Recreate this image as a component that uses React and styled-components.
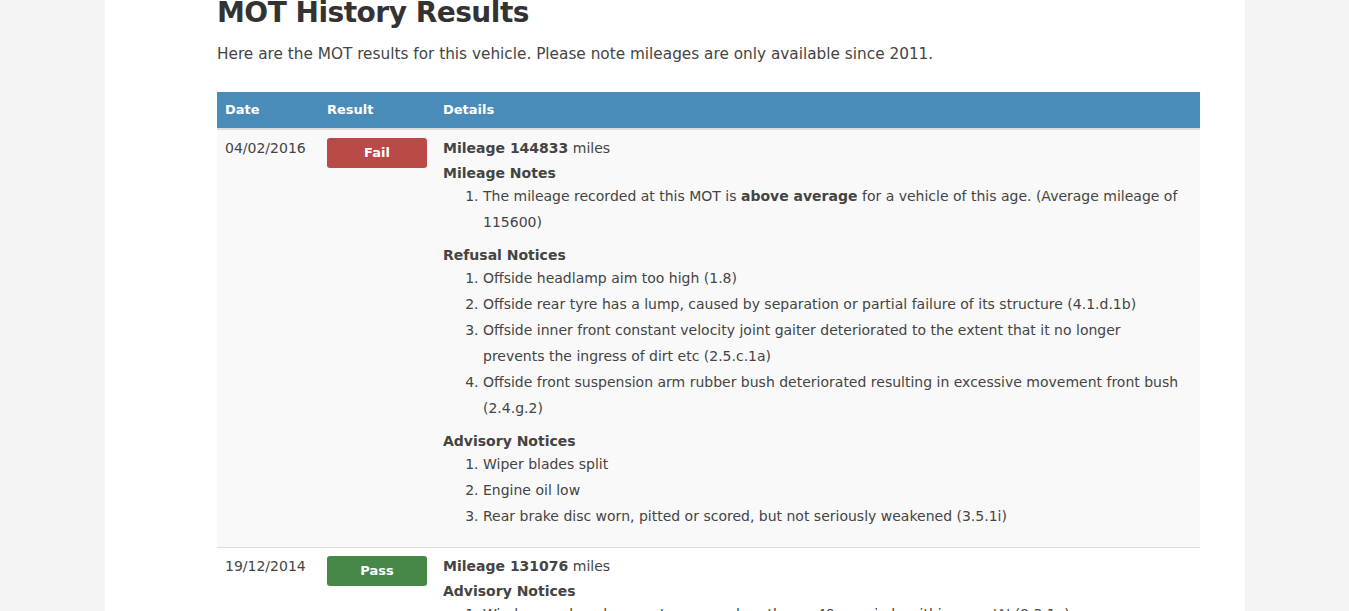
import React from "react";
import styled, { createGlobalStyle } from "styled-components";

const GlobalStyle = createGlobalStyle`
  html, body {
    margin: 0;
    padding: 0;
    background: #f4f4f4;
  }
  body {
    font-family: "DejaVu Sans", "Liberation Sans", sans-serif;
    color: #444;
  }
`;

const results = [
  {
    date: "04/02/2016",
    result: "Fail",
    mileage: "144833",
    sections: [
      {
        title: "Mileage Notes",
        items: [
          <>
            The mileage recorded at this MOT is <b>above average</b> for a
            vehicle of this age. (Average mileage of 115600)
          </>,
        ],
      },
      {
        title: "Refusal Notices",
        items: [
          "Offside headlamp aim too high (1.8)",
          "Offside rear tyre has a lump, caused by separation or partial failure of its structure (4.1.d.1b)",
          <>
            Offside inner front constant velocity joint gaiter deteriorated to
            the extent that it no longer
            <br />
            prevents the ingress of dirt etc (2.5.c.1a)
          </>,
          "Offside front suspension arm rubber bush deteriorated resulting in excessive movement front bush (2.4.g.2)",
        ],
      },
      {
        title: "Advisory Notices",
        items: [
          "Wiper blades split",
          "Engine oil low",
          "Rear brake disc worn, pitted or scored, but not seriously weakened (3.5.1i)",
        ],
      },
    ],
  },
  {
    date: "19/12/2014",
    result: "Pass",
    mileage: "131076",
    sections: [
      {
        title: "Advisory Notices",
        items: [
          "Windscreen has damage to an area less than a 40mm circle within zone 'A' (8.3.1a)",
        ],
      },
    ],
  },
];

function App() {
  return (
    <>
      <GlobalStyle />
      <Page>
        <Content>
          <Title>MOT History Results</Title>
          <Intro>
            Here are the MOT results for this vehicle. Please note mileages are
            only available since 2011.
          </Intro>
          <Table>
            <thead>
              <tr>
                <Th $width="86px">Date</Th>
                <Th $width="100px">Result</Th>
                <Th>Details</Th>
              </tr>
            </thead>
            <tbody>
              {results.map((r, i) => (
                <Row key={r.date} $striped={i % 2 === 0}>
                  <Td>{r.date}</Td>
                  <Td>
                    <Badge $pass={r.result === "Pass"}>{r.result}</Badge>
                  </Td>
                  <Td>
                    <Line>
                      <b>Mileage {r.mileage}</b> miles
                    </Line>
                    {r.sections.map((s) => (
                      <div key={s.title}>
                        <Heading>{s.title}</Heading>
                        <List>
                          {s.items.map((item, j) => (
                            <li key={j}>{item}</li>
                          ))}
                        </List>
                      </div>
                    ))}
                  </Td>
                </Row>
              ))}
            </tbody>
          </Table>
        </Content>
      </Page>
    </>
  );
}

const Page = styled.div`
  height: 611px;
  overflow: hidden;
  display: flex;
  padding-left: 105px;
`;

const Content = styled.div`
  width: 1140px;
  background: #fff;
  box-sizing: border-box;
  padding: 0 45px 0 112px;
`;

const Title = styled.h1`
  margin: -5px 0 0;
  font-size: 28px;
  letter-spacing: -0.5px;
  line-height: 36px;
  font-weight: bold;
  color: #333;
`;

const Intro = styled.p`
  margin: 13px 0 28px;
  font-size: 15.3px;
  line-height: 20px;
  color: #444;
`;

const Table = styled.table`
  width: 100%;
  table-layout: fixed;
  border-collapse: collapse;
  font-size: 14px;
`;

const Th = styled.th`
  width: ${(p) => p.$width || "auto"};
  background: #4a8cb9;
  color: #fff;
  text-align: left;
  font-size: 13px;
  font-weight: bold;
  padding: 8px;
  line-height: 20px;
  border-bottom: 2px solid #dddddd;
`;

const Row = styled.tr`
  background: ${(p) => (p.$striped ? "#f9f9f9" : "#fff")};
`;

const Td = styled.td`
  vertical-align: top;
  padding: 8px;
  line-height: 20px;
  border-top: 1px solid #dddddd;
`;

const Badge = styled.div`
  width: 100px;
  height: 30px;
  line-height: 30px;
  border-radius: 3px;
  text-align: center;
  color: #fff;
  font-size: 13px;
  font-weight: bold;
  background: ${(p) => (p.$pass ? "#468847" : "#b94a48")};
`;

const Line = styled.div`
  b {
    font-weight: bold;
  }
`;

const Heading = styled.div`
  margin-top: 5px;
  font-weight: bold;
`;

const List = styled.ol`
  margin: 0 0 10px;
  padding-left: 40px;
  li {
    line-height: 26px;
  }
`;

export default App;
